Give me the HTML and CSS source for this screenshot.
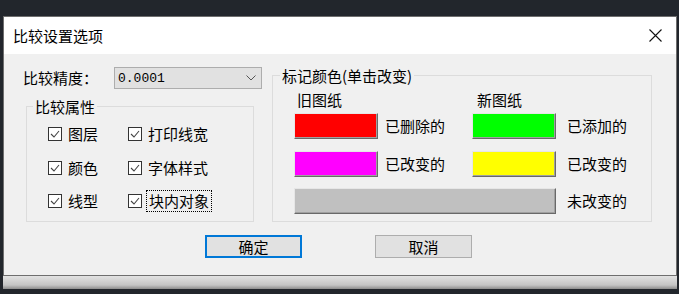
FILE: index.html
```html
<!DOCTYPE html>
<html lang="zh-CN">
<head>
<meta charset="utf-8">
<title>比较设置选项</title>
<link rel="stylesheet" href="styles.css">
</head>
<body>
<div class="screen">
  <div class="dialog">
    <div class="titlebar">
      <span class="title">比较设置选项</span>
      <svg class="close" width="13" height="13" viewBox="0 0 13 13"><path d="M0.5 0.5 L12.5 12.5 M12.5 0.5 L0.5 12.5" stroke="#111" stroke-width="1.1" fill="none"/></svg>
    </div>
    <div class="content">
      <div class="main">
        <div class="left">
          <div class="precision">
            <span class="plabel">比较精度：</span>
            <div class="combo">
              <span class="combo-val">0.0001</span>
              <svg class="chev" width="10" height="6" viewBox="0 0 10 6"><path d="M0.5 0.5 L5 5 L9.5 0.5" stroke="#555" stroke-width="1" fill="none"/></svg>
            </div>
          </div>
          <fieldset class="group attrs">
            <legend>比较属性</legend>
            <div class="checks">
              <label class="chk"><span class="box"><svg width="12" height="12" viewBox="0 0 12 12"><path d="M2 6 L5 9 L10 3" stroke="#444" stroke-width="1.1" fill="none"/></svg></span><span>图层</span></label>
              <label class="chk"><span class="box"><svg width="12" height="12" viewBox="0 0 12 12"><path d="M2 6 L5 9 L10 3" stroke="#444" stroke-width="1.1" fill="none"/></svg></span><span>打印线宽</span></label>
              <label class="chk"><span class="box"><svg width="12" height="12" viewBox="0 0 12 12"><path d="M2 6 L5 9 L10 3" stroke="#444" stroke-width="1.1" fill="none"/></svg></span><span>颜色</span></label>
              <label class="chk"><span class="box"><svg width="12" height="12" viewBox="0 0 12 12"><path d="M2 6 L5 9 L10 3" stroke="#444" stroke-width="1.1" fill="none"/></svg></span><span>字体样式</span></label>
              <label class="chk"><span class="box"><svg width="12" height="12" viewBox="0 0 12 12"><path d="M2 6 L5 9 L10 3" stroke="#444" stroke-width="1.1" fill="none"/></svg></span><span>线型</span></label>
              <label class="chk"><span class="box"><svg width="12" height="12" viewBox="0 0 12 12"><path d="M2 6 L5 9 L10 3" stroke="#444" stroke-width="1.1" fill="none"/></svg></span><span class="focus">块内对象</span></label>
            </div>
          </fieldset>
        </div>
        <fieldset class="group colors">
          <legend>标记颜色(单击改变)</legend>
          <div class="colhead">
            <span class="h-old">旧图纸</span>
            <span></span>
            <span class="h-new">新图纸</span>
            <span></span>
          </div>
          <div class="swatches">
            <div class="swatch red"></div>
            <span class="slabel">已删除的</span>
            <div class="swatch green"></div>
            <span class="slabel wide">已添加的</span>
            <div class="swatch magenta"></div>
            <span class="slabel">已改变的</span>
            <div class="swatch yellow"></div>
            <span class="slabel wide">已改变的</span>
            <div class="swatch gray span3"></div>
            <span class="slabel wide">未改变的</span>
          </div>
        </fieldset>
      </div>
      <div class="buttons">
        <div class="btn default">确定</div>
        <div class="btn">取消</div>
      </div>
    </div>
  </div>
  <div class="shadow"></div>
</div>
</body>
</html>
```
FILE: styles.css
```css
html, body {
  margin: 0;
  padding: 0;
}
body {
  width: 679px;
  height: 294px;
  overflow: hidden;
  background: #22262c;
  font-family: "Noto Sans CJK SC", "Liberation Sans", sans-serif;
  font-size: 15px;
  color: #000;
}
.screen {
  padding: 16px 0 0 3px;
}
.dialog {
  box-sizing: border-box;
  width: 674px;
  height: 260px;
  border: 1px solid #6e6e6e;
  background: #f0f0f0;
}
.shadow {
  width: 674px;
  height: 13px;
  background: linear-gradient(#e2e2e2, #c4c4c4 70%, #8c8c8c);
}
.titlebar {
  height: 37px;
  background: #fff;
  display: flex;
  align-items: center;
  justify-content: space-between;
  padding: 0 14px 0 9px;
}
.title {
  font-size: 15px;
  line-height: 18px;
  color: #000;
}
.close {
  display: block;
}
.content {
  padding: 13px 0 0 19px;
}
.main {
  display: flex;
  height: 155px;
}
.left {
  width: 239px;
  display: flex;
  flex-direction: column;
}
.precision {
  display: flex;
  align-items: center;
  height: 22px;
}
.plabel {
  width: 91px;
  line-height: 18px;
}
.combo {
  box-sizing: border-box;
  width: 148px;
  height: 22px;
  border: 1px solid #adadad;
  background: #e1e1e1;
  display: flex;
  align-items: center;
  justify-content: space-between;
  padding: 0 5px 0 3px;
}
.combo-val {
  font-family: "Liberation Mono", monospace;
  font-size: 13px;
  color: #000;
}
.chev {
  display: block;
}
.group {
  margin: 0;
  padding: 0;
  border: 1px solid #dcdcdc;
  min-width: 0;
}
.group legend {
  padding: 0 2px;
  margin-left: 6px;
  line-height: 17px;
  font-size: 15px;
}
.attrs {
  margin: 9px 0 0 3px;
  width: 228px;
  box-sizing: border-box;
  flex: 1;
}
.checks {
  display: grid;
  grid-template-columns: 80px auto;
  grid-auto-rows: 20px;
  row-gap: 13.5px;
  padding: 9px 0 0 21px;
}
.chk {
  display: flex;
  align-items: center;
  gap: 6px;
  line-height: 18px;
}
.box {
  box-sizing: border-box;
  width: 14px;
  height: 14px;
  border: 1px solid #333;
  background: #fff;
  display: flex;
  align-items: center;
  justify-content: center;
}
.box svg {
  display: block;
}
.focus {
  outline: 1px dotted #000;
  outline-offset: 1px;
  padding: 0 1px;
}
.colors {
  margin-left: 10px;
  width: 380px;
  box-sizing: border-box;
  padding: 0;
}
.colors legend {
  margin-left: 7px;
}
.colhead {
  display: grid;
  grid-template-columns: 84px 94px 84px auto;
  padding: 7px 0 0 21px;
  line-height: 18px;
  height: 18px;
}
.h-old {
  padding-left: 3px;
}
.h-new {
  padding-left: 5px;
}
.swatches {
  display: grid;
  grid-template-columns: 84px 94px 84px auto;
  grid-auto-rows: 26px;
  row-gap: 11.5px;
  padding: 4px 0 0 21px;
}
.swatch {
  box-sizing: border-box;
  height: 26px;
  border-top: 1px solid #e6e6e6;
  border-left: 1px solid #e6e6e6;
  border-right: 1px solid #696969;
  border-bottom: 1px solid #696969;
  box-shadow: inset -1px -1px 0 #a0a0a0;
}
.span3 {
  grid-column: span 3;
}
.red { background: #ff0000; }
.green { background: #00ff00; }
.magenta { background: #ff00ff; }
.yellow { background: #ffff00; }
.gray { background: #c0c0c0; }
.slabel {
  display: flex;
  align-items: center;
  padding-left: 7px;
  line-height: 18px;
}
.slabel.wide {
  padding-left: 11px;
}
.buttons {
  display: flex;
  gap: 73px;
  padding: 13px 0 0 182px;
}
.btn {
  box-sizing: border-box;
  width: 97px;
  height: 23px;
  border: 1px solid #adadad;
  background: #e1e1e1;
  display: flex;
  align-items: center;
  justify-content: center;
  line-height: 18px;
}
.btn.default {
  border: 2px solid #0078d7;
}
```
